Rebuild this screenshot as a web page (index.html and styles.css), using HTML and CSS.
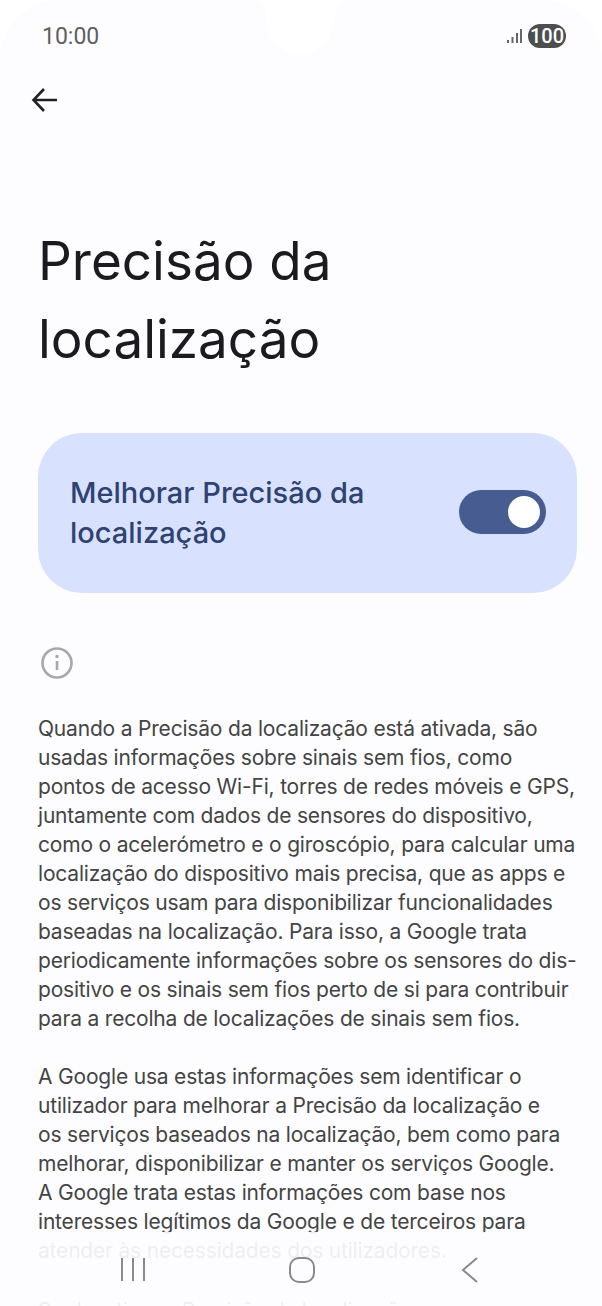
FILE: index.html
```html
<!DOCTYPE html>
<html lang="pt">
<head>
    <meta charset="UTF-8">
    <title>Precisão da localização</title>
    <meta name="viewport" content="width=device-width, initial-scale=1.0">
    <link rel="stylesheet" href="styles.css">
</head>
<body>
    <div class="screen">
        <svg class="notch" width="602" height="60" viewBox="0 0 602 60">
            <path fill="#fff" d="M254 0C264 0 266 10 267 22C269 42 284 55 300 55C316 55 332 42 334 22C335 10 337 0 347 0Z"/>
        </svg>
        <div class="status-bar">
            <span class="clock">10:00</span>
            <div class="status-icons">
                <svg width="16" height="16" viewBox="0 0 16 16">
                    <g fill="#666">
                        <rect x="0" y="12" width="2" height="3"/>
                        <rect x="4.500" y="9" width="2" height="6"/>
                        <rect x="9" y="5" width="2" height="10"/>
                        <rect x="13" y="1" width="2" height="14"/>
                    </g>
                </svg>
                <span class="battery">100</span>
            </div>
        </div>
        <div class="toolbar">
            <svg width="28" height="28" viewBox="0 0 28 28">
                <path d="M27 14H4M14 3L3.500 14L14 25" fill="none" stroke="#222" stroke-width="2.600"/>
            </svg>
        </div>
        <h1>Precisão da<br>localização</h1>
        <div class="main-switch">
            <div class="switch-label">Melhorar Precisão da<br>localização</div>
            <div class="toggle"><div class="knob"></div></div>
        </div>
        <svg class="info-icon" width="34" height="34" viewBox="0 0 34 34">
            <circle cx="17" cy="17" r="14.500" fill="none" stroke="#a8a8a8" stroke-width="2.600"/>
            <rect x="15.700" y="15" width="2.600" height="9" fill="#a8a8a8"/>
            <circle cx="17" cy="10.500" r="1.700" fill="#a8a8a8"/>
        </svg>
        <p class="desc">Quando a Precisão da localização está ativada, são<br>usadas informações sobre sinais sem fios, como<br>pontos de acesso Wi-Fi, torres de redes móveis e GPS,<br>juntamente com dados de sensores do dispositivo,<br>como o acelerómetro e o giroscópio, para calcular uma<br>localização do dispositivo mais precisa, que as apps e<br>os serviços usam para disponibilizar funcionalidades<br>baseadas na localização. Para isso, a Google trata<br>periodicamente informações sobre os sensores do dis-<br>positivo e os sinais sem fios perto de si para contribuir<br>para a recolha de localizações de sinais sem fios.</p>
        <p class="desc">A Google usa estas informações sem identificar o<br>utilizador para melhorar a Precisão da localização e<br>os serviços baseados na localização, bem como para<br>melhorar, disponibilizar e manter os serviços Google.<br>A Google trata estas informações com base nos<br>interesses legítimos da Google e de terceiros para<br>atender às necessidades dos utilizadores.</p>
        <p class="desc desc-last">Se desativar a Precisão da localização, as apps e</p>
        <div class="nav-bar">
            <svg width="24" height="26" viewBox="0 0 24 26">
                <path d="M1 1V24M12 1V24M23 1V24" stroke="#8a8a8a" stroke-width="2" fill="none"/>
            </svg>
            <svg class="nav-home" width="26" height="26" viewBox="0 0 26 26">
                <rect x="1" y="1" width="24" height="24" rx="9" stroke="#8a8a8a" stroke-width="2" fill="none"/>
            </svg>
            <svg width="17" height="26" viewBox="0 0 17 26">
                <path d="M16 1L2 13L16 25" stroke="#8a8a8a" stroke-width="2" fill="none"/>
            </svg>
        </div>
    </div>
</body>
</html>
```

FILE: styles.css
```css
body {
    margin: 0;
    background: #fff;
    font-family: Inter, Roboto, sans-serif;
}
.screen {
    position: relative;
    width: 602px;
    height: 1306px;
    overflow: hidden;
    background: #fdfdff;
    border-radius: 60px 60px 0 0;
}
.notch {
    position: absolute;
    top: 0;
    left: 0;
}
.status-bar {
    position: relative;
    display: flex;
    justify-content: space-between;
    align-items: center;
    height: 28px;
    padding: 22px 36px 0 42px;
}
.clock {
    font-family: Roboto, sans-serif;
    font-size: 23px;
    color: #5f5f5f;
}
.status-icons {
    display: flex;
    align-items: center;
    gap: 5px;
}
.battery {
    background: #4e4e4e;
    color: #fff;
    font-family: Roboto, sans-serif;
    font-size: 20px;
    font-weight: 500;
    line-height: 24px;
    padding: 0 2px;
    border-radius: 12px;
}
.toolbar {
    height: 28px;
    padding: 36px 0 0 30px;
}
h1 {
    margin: 108px 0 0 38px;
    font-size: 53px;
    font-weight: 400;
    line-height: 78px;
    color: #1b1b1f;
}
.main-switch {
    display: flex;
    align-items: center;
    justify-content: space-between;
    height: 160px;
    margin: 55px 25px 0 38px;
    padding: 0 31px 0 32px;
    background: #d8e2ff;
    border-radius: 44px;
}
.switch-label {
    font-size: 29px;
    font-weight: 500;
    line-height: 40px;
    color: #2f4272;
}
.toggle {
    display: flex;
    justify-content: flex-end;
    align-items: center;
    width: 87px;
    height: 44px;
    margin-bottom: 2px;
    padding-right: 6px;
    box-sizing: border-box;
    background: #475d92;
    border-radius: 22px;
}
.knob {
    width: 32px;
    height: 32px;
    background: #fff;
    border-radius: 50%;
}
.info-icon {
    display: block;
    margin: 53px 0 0 40px;
}
.desc {
    margin: 34px 0 0 38px;
    font-size: 21px;
    letter-spacing: -0.19px;
    line-height: 29px;
    color: #444;
    white-space: nowrap;
}
.desc + .desc {
    margin-top: 29px;
}
.desc + .desc-last {
    margin-top: 31px;
}
.nav-bar {
    position: absolute;
    left: 0;
    right: 0;
    top: 1232px;
    bottom: 0;
    display: flex;
    justify-content: space-between;
    padding: 25px 124px 0 121px;
    box-sizing: border-box;
    background: #fdfdffeb;
}
.nav-home {
    margin-right: 3px;
}
```
